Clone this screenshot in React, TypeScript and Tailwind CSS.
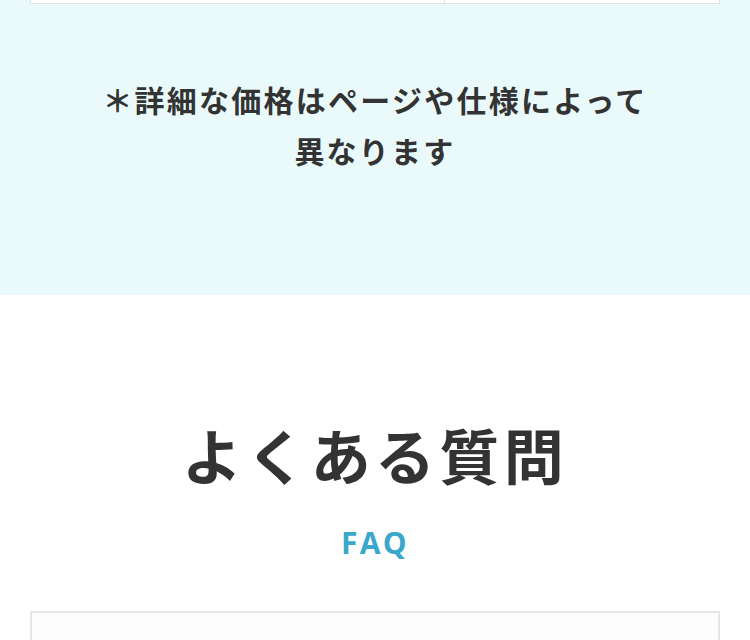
import React from 'react'

export default function App() {
  return (
    <div className="w-[750px] min-h-[640px] bg-white text-[#333333]" style={{ fontFamily: '"Noto Sans CJK JP", "Noto Sans", sans-serif' }}>
      <section className="bg-[#eafafb] pb-[119px]">
        <div className="mx-[30px] h-[4px] flex border-x border-b border-[#e2e2e2] bg-white">
          <div className="w-[414px] border-r border-[#e2e2e2]" />
          <div className="flex-1" />
        </div>
        <p className="mt-[70px] text-center text-[30px] leading-[51px] font-bold tracking-[0.075em]">
          ＊詳細な価格はページや仕様によって
          <br />
          異なります
        </p>
      </section>
      <section className="pt-[114px]">
        <h2 className="text-center text-[60px] leading-[90px] font-bold tracking-[0.072em]">よくある質問</h2>
        <div className="mt-[24px] text-center text-[30px] leading-[40px] font-bold tracking-[0.08em] text-[#3aa7cb]" style={{ fontFamily: '"Open Sans", sans-serif' }}>
          FAQ
        </div>
        <div className="mx-[30px] mt-[48px] h-[60px] border-2 border-[#e6e6e6] bg-[#fdfdfd]" />
      </section>
    </div>
  )
}
